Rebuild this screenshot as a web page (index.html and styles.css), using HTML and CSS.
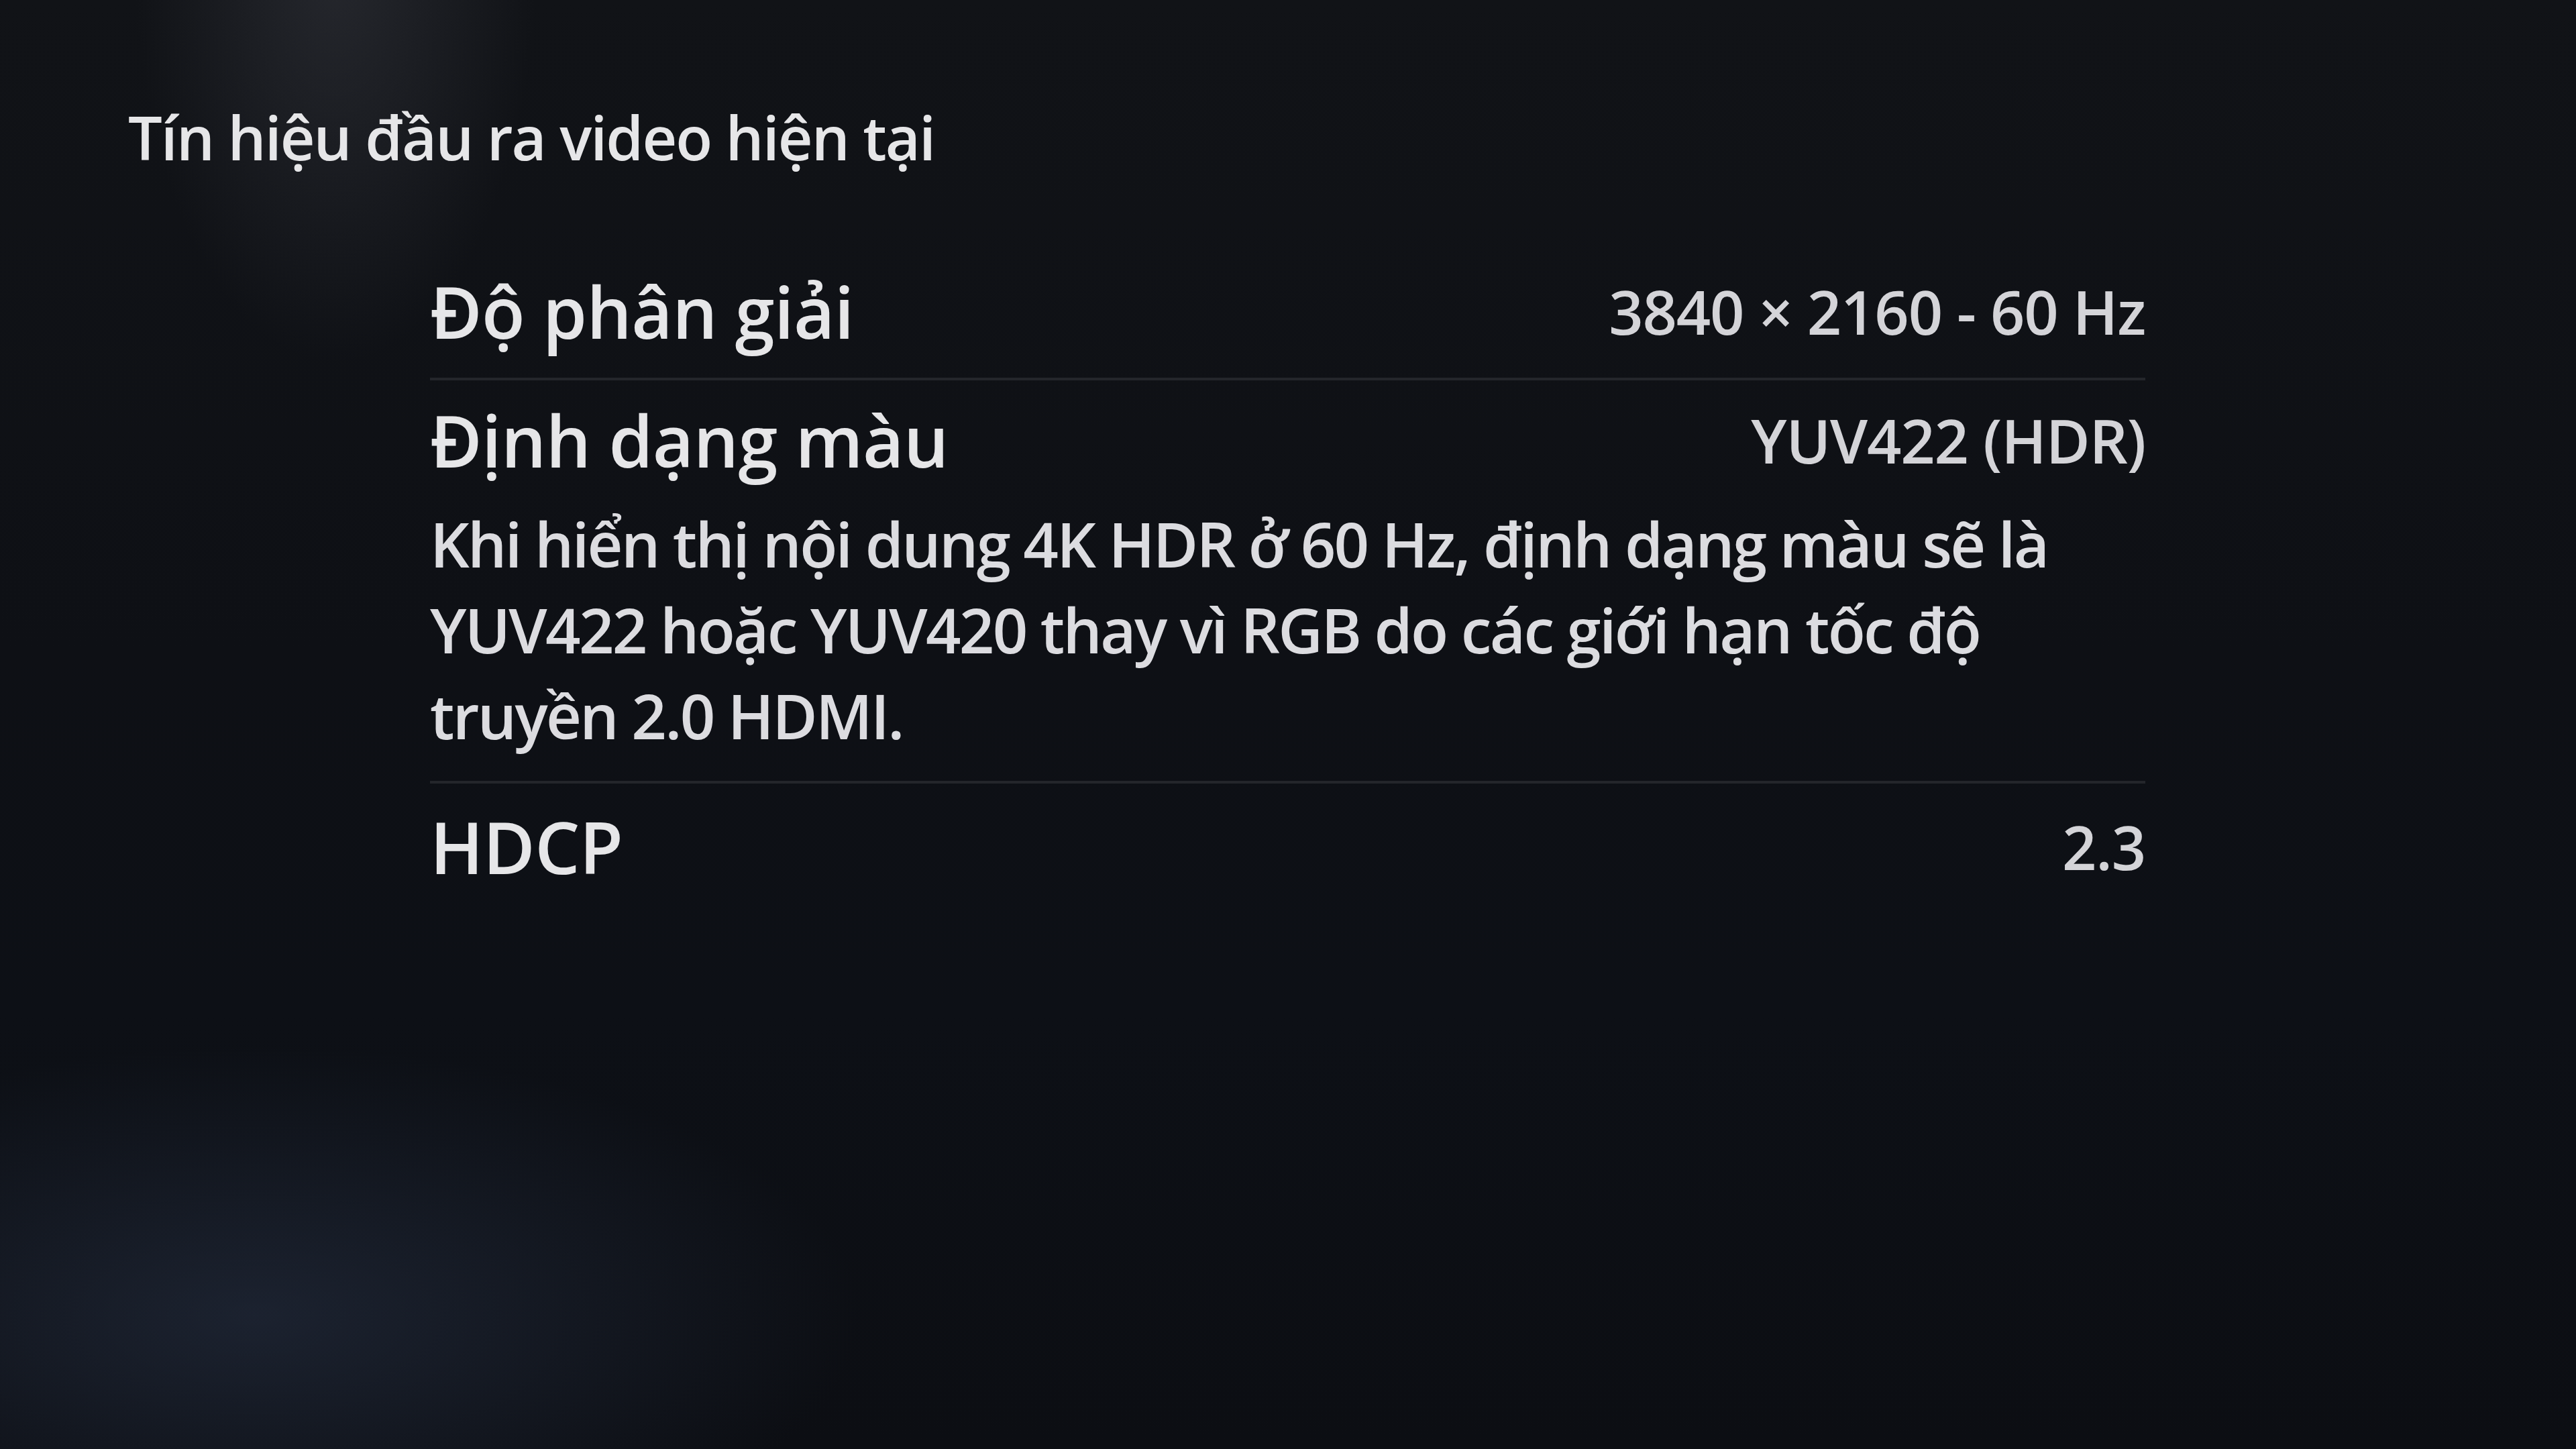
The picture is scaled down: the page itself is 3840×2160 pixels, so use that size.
FILE: index.html
```html
<!DOCTYPE html>
<html lang="vi">
<head>
<meta charset="utf-8">
<title>Tín hiệu đầu ra video hiện tại</title>
<link rel="stylesheet" href="styles.css">
</head>
<body>
<main class="screen">
  <h1 class="title">Tín hiệu đầu ra video hiện tại</h1>
  <section class="list">
    <div class="item item-first">
      <div class="row">
        <span class="label">Độ phân giải</span>
        <span class="value">3840 × 2160 - 60 Hz</span>
      </div>
    </div>
    <div class="item item-mid">
      <div class="row">
        <span class="label">Định dạng màu</span>
        <span class="value">YUV422 (HDR)</span>
      </div>
      <p class="note">Khi hiển thị nội dung 4K HDR ở 60 Hz, định dạng màu sẽ là YUV422 hoặc YUV420 thay vì RGB do các giới hạn tốc độ truyền 2.0 HDMI.</p>
    </div>
    <div class="item item-last">
      <div class="row">
        <span class="label">HDCP</span>
        <span class="value">2.3</span>
      </div>
    </div>
  </section>
</main>
</body>
</html>
```

FILE: styles.css
```css
html, body {
  margin: 0;
  padding: 0;
  width: 3840px;
  height: 2160px;
  overflow: hidden;
}

body {
  background-color: #0d0f13;
  background-image:
    radial-gradient(ellipse 300px 600px at 500px -60px, rgba(62, 64, 72, 0.45), rgba(62, 64, 72, 0) 100%),
    radial-gradient(ellipse 900px 400px at 380px 1960px, rgba(40, 50, 70, 0.55), rgba(40, 50, 70, 0) 100%),
    linear-gradient(180deg, #111317 0%, #0e1015 45%, #0d1016 70%, #0c0e13 100%);
  font-family: "Open Sans", "Noto Sans", sans-serif;
  color: #e4e4e6;
}

.screen {
  padding: 143px 0 0 191px;
}

.title {
  margin: 0;
  font-size: 90px;
  line-height: 122px;
  font-weight: 600;
  color: #e6e6e8;
  letter-spacing: -2px;
}

.list {
  margin: 127px 0 0 450px;
  width: 2557px;
}

.item {
  border-bottom: 4px solid #24262b;
}

.item-first {
  padding-bottom: 27px;
}

.item-mid {
  padding: 17px 0 33px;
}

.item-last {
  padding-top: 22px;
  border-bottom: none;
}

.row {
  display: flex;
  justify-content: space-between;
  align-items: center;
  height: 144px;
}

.label {
  font-size: 106px;
  line-height: 144px;
  font-weight: 600;
  color: #e6e6e8;
  letter-spacing: -0.6px;
}

.value {
  font-size: 90px;
  line-height: 122px;
  font-weight: 600;
  color: #d4d4d8;
  letter-spacing: -1.2px;
}

.note {
  margin: 19px 0 0;
  font-size: 92px;
  line-height: 128px;
  font-weight: 600;
  color: #dcdce0;
  letter-spacing: -2.7px;
  width: 2500px;
}
```
